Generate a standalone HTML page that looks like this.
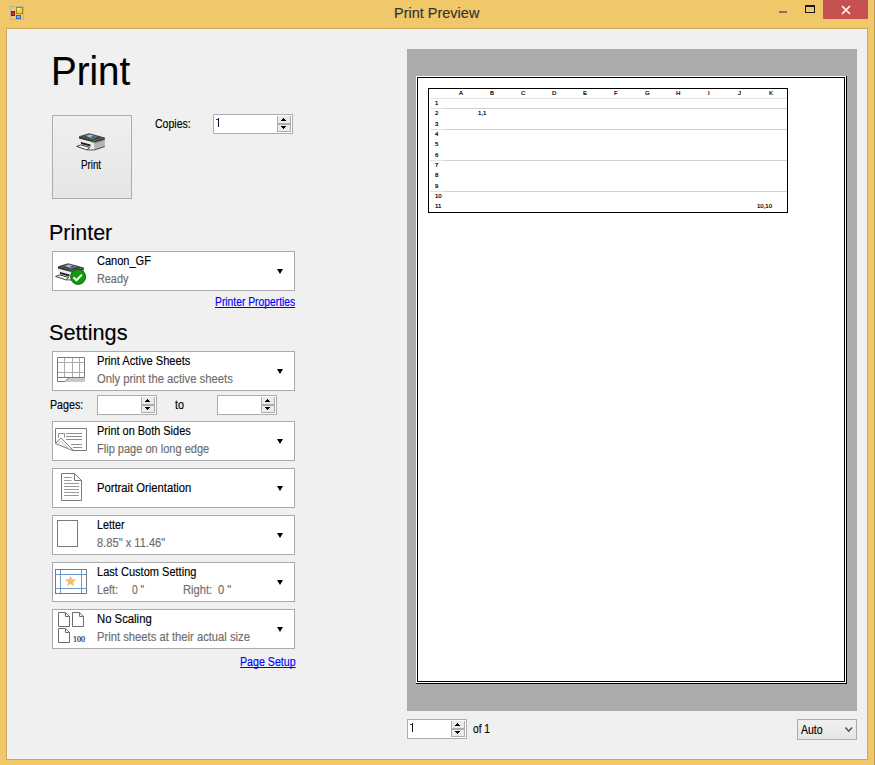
<!DOCTYPE html>
<html><head><meta charset="utf-8">
<style>
*{margin:0;padding:0;box-sizing:border-box}
html,body{width:875px;height:765px;overflow:hidden;background:#F0C869;font-family:"Liberation Sans",sans-serif}
.a{position:absolute}
svg{position:absolute;display:block;overflow:visible}
.t{position:absolute;white-space:nowrap;font-size:12px;line-height:14px;color:#000;transform-origin:0 0;-webkit-text-stroke:0.15px currentColor}
.g{color:#6D6D6D}
.combo{position:absolute;left:52px;width:243px;height:40px;background:#fff;border:1px solid #ABABAB}
.spin{position:absolute;height:20px;background:#fff;border:1px solid #ABADB3}
.link{color:#0000FF;text-decoration:underline;text-decoration-skip-ink:none}
.cl{position:absolute;left:430px;height:1px;background:#E3E3E3}
.cd{position:absolute;left:446px;width:341px;height:1px;background:#D0D0D0}
.hd{position:absolute;margin-top:1px;font-size:6px;line-height:7px;font-weight:normal;color:#000;white-space:nowrap;-webkit-text-stroke:0.2px #000}
</style></head><body>
<!-- frame -->
<div class="a" style="left:874px;top:0;width:1px;height:765px;background:#B9974F"></div>
<div class="a" style="left:6px;top:28px;width:862px;height:732px;background:#F5F6FB;border:1px solid #C9A55A"></div>
<div class="a" style="left:8px;top:30px;width:858px;height:728px;background:#F0F0F0"></div>

<!-- title bar -->
<svg style="left:10px;top:6px" width="14" height="14" viewBox="0 0 14 14" shape-rendering="crispEdges">
  <rect x="0.5" y="0.5" width="13" height="13" fill="none" stroke="#B7B5AC" stroke-width="1"/>
  <rect x="6" y="1" width="7" height="7" fill="#A8841C"/>
  <rect x="7" y="2" width="5" height="5" fill="#F6CF45"/>
  <rect x="7" y="2" width="3" height="2" fill="#FBE9A0"/>
  <rect x="1" y="5" width="4" height="5" fill="#8E1414"/>
  <rect x="2" y="6" width="2" height="3" fill="#D83030"/>
  <rect x="6" y="9" width="5" height="4" fill="#2F63C0"/>
  <rect x="7" y="10" width="3" height="2" fill="#7FB0F0"/>
  <rect x="2" y="2" width="3" height="2" fill="#F5C870"/>
  <rect x="1" y="11" width="2" height="2" fill="#F5C870"/>
  <rect x="4" y="11" width="1" height="2" fill="#F5C870"/>
  <rect x="12" y="9" width="1" height="3" fill="#F5C870"/>
</svg>
<div id="t1" class="t" style="left:394px;top:4px;font-size:15px;line-height:18px;color:#333;transform:scaleX(0.966)">Print Preview</div>
<div class="a" style="left:779px;top:11px;width:8px;height:2px;background:#857650"></div>
<div class="a" style="left:805px;top:5px;width:10px;height:8px;border:1px solid #1A1A1A;border-top-width:2px"></div>
<div class="a" style="left:823px;top:0;width:45px;height:19px;background:#C75050"></div>
<svg style="left:823px;top:0" width="45" height="19" viewBox="0 0 45 19"><path d="M19 6 L27 14 M27 6 L19 14" stroke="#fff" stroke-width="1.6"/></svg>

<!-- left panel -->
<div id="t2" class="t" style="left:51px;top:49px;font-size:40px;line-height:44px;transform:scaleX(0.963)">Print</div>

<div class="a" style="left:52px;top:115px;width:80px;height:84px;border:1px solid #ADADAD;background:linear-gradient(#F0F0F0,#E5E5E5)"></div>
<svg style="left:74px;top:130px" width="34" height="24" viewBox="0 0 34 24">
  <polygon points="5,8.5 20.2,12.6 20.2,19.6 5,15.4" fill="#EDEDED"/>
  <polygon points="20.2,12 30.8,8.6 30.8,16.4 20.2,19.8" fill="#B4B4B4"/>
  <polygon points="20.2,12 30.8,8.6 30.8,10.5 20.2,14" fill="#9A9A9A"/>
  <polygon points="5,6.2 15.2,3.2 30.8,7.6 20.2,10.8" fill="#474747"/>
  <polygon points="5,6.2 20.2,10.8 20.2,12.6 5,8.5" fill="#2E2E2E"/>
  <polygon points="20.2,10.8 30.8,7.6 30.8,9.4 20.2,12.6" fill="#3A3A3A"/>
  <polygon points="11.5,5.8 16,4.6 23,6.8 18.5,8.4" fill="#9CC4F0"/>
  <polygon points="16.5,6.6 20.5,6 22.5,7 18.5,8.3" fill="#2F6F4F"/>
  <rect x="17.8" y="11.3" width="1.4" height="1.4" fill="#2DB52D"/>
  <polygon points="7,12 16.5,14.6 16.5,16.6 7,14" fill="#1E1E1E"/>
  <polygon points="2.6,16.4 6.8,15 15.8,17.4 12.6,19.8" fill="#FFFFFF" stroke="#2A2A2A" stroke-width="0.9" stroke-linejoin="round"/>
  <path d="M12.8 19.8 L20.2 20 L30.8 16.6" fill="none" stroke="#3A3A3A" stroke-width="0.9"/>
</svg>
<div id="t3" class="t" style="left:80.80px;top:158px;transform:scaleX(0.810)">Print</div>

<div id="t4" class="t" style="left:155.2px;top:117px;transform:scaleX(0.879)">Copies:</div>
<div class="spin" style="left:213px;top:114px;width:80px"></div>
<svg style="left:277px;top:116px" width="14" height="16" viewBox="0 0 14 16" shape-rendering="crispEdges">
  <rect x="0" y="0" width="14" height="16" fill="#EBEBEB"/>
  <rect x="0" y="0" width="1" height="16" fill="#ADADAD"/><rect x="13" y="0" width="1" height="16" fill="#ADADAD"/>
  <rect x="0" y="15" width="14" height="1" fill="#ADADAD"/><rect x="0" y="7" width="14" height="2" fill="#ADADAD"/>
  <rect x="6" y="2" width="1" height="1" fill="#000"/><rect x="5" y="3" width="3" height="1" fill="#000"/><rect x="4" y="4" width="5" height="1" fill="#000"/>
  <rect x="4" y="10" width="5" height="1" fill="#000"/><rect x="5" y="11" width="3" height="1" fill="#000"/><rect x="6" y="12" width="1" height="1" fill="#000"/>
</svg>
<div class="a" style="left:218px;top:118px;width:1px;height:9px;background:#1A0A30"></div><div class="a" style="left:216px;top:119px;width:2px;height:1px;background:#5A3A20"></div>

<div id="t6" class="t" style="left:49px;top:220px;font-size:22.5px;line-height:26px;transform:scaleX(0.954)">Printer</div>
<div class="combo" style="top:251px"></div>
<svg style="left:53px;top:260px" width="36" height="28" viewBox="0 0 36 28">
  <polygon points="5,8.5 20.2,12.6 20.2,19.6 5,15.4" fill="#EDEDED"/>
  <polygon points="20.2,12 30.8,8.6 30.8,16.4 20.2,19.8" fill="#B4B4B4"/>
  <polygon points="20.2,12 30.8,8.6 30.8,10.5 20.2,14" fill="#9A9A9A"/>
  <polygon points="5,6.2 15.2,3.2 30.8,7.6 20.2,10.8" fill="#474747"/>
  <polygon points="5,6.2 20.2,10.8 20.2,12.6 5,8.5" fill="#2E2E2E"/>
  <polygon points="20.2,10.8 30.8,7.6 30.8,9.4 20.2,12.6" fill="#3A3A3A"/>
  <polygon points="11.5,5.8 16,4.6 23,6.8 18.5,8.4" fill="#9CC4F0"/>
  <polygon points="16.5,6.6 20.5,6 22.5,7 18.5,8.3" fill="#2F6F4F"/>
  <rect x="17.8" y="11.3" width="1.4" height="1.4" fill="#2DB52D"/>
  <polygon points="7,12 16.5,14.6 16.5,16.6 7,14" fill="#1E1E1E"/>
  <polygon points="2.6,16.4 6.8,15 15.8,17.4 12.6,19.8" fill="#FFFFFF" stroke="#2A2A2A" stroke-width="0.9" stroke-linejoin="round"/>
  <path d="M12.8 19.8 L20.2 20 L30.8 16.6" fill="none" stroke="#3A3A3A" stroke-width="0.9"/>

  <circle cx="25.1" cy="16.9" r="7.5" fill="#0B9B0B" stroke="#066806" stroke-width="0.9"/>
  <path d="M20.4 17.3 L23.4 20.3 L28.9 14.6" fill="none" stroke="#fff" stroke-width="2"/>
</svg>
<div id="t7" class="t" style="left:96.77px;top:254px;transform:scaleX(0.918)">Canon_GF</div>
<div id="t8" class="t g" style="left:97.26px;top:272px;transform:scaleX(0.904)">Ready</div>
<div id="t9" class="t link" style="left:215px;top:295px;transform:scaleX(0.859)">Printer Properties</div>

<div id="t10" class="t" style="left:49px;top:320px;font-size:22.5px;line-height:26px;transform:scaleX(0.966)">Settings</div>
<div class="combo" style="top:351px"></div>
<svg style="left:52px;top:351px" width="40" height="40" viewBox="0 0 40 40">
  <g stroke="#ABABAB" stroke-width="1" fill="none"><path d="M12.5 7 V26 M20.5 7 V26 M27.5 7 V26 M6 11.5 H32 M6 21.5 H32"/></g>
  <polygon points="16.5,27 33,27 33,31 13,31" fill="#C9C9C9"/>
  <path d="M5.5 26.5 V6.5 H32.5 V26.5 H5.5 M5.5 26.5 V30.5 H13 L16.5 27" fill="none" stroke="#7A7A7A" stroke-width="1"/>
</svg>
<div id="t11" class="t" style="left:97.15px;top:354px;transform:scaleX(0.927)">Print Active Sheets</div>
<div id="t12" class="t g" style="left:96.98px;top:372px;transform:scaleX(0.938)">Only print the active sheets</div>

<div id="t13" class="t" style="left:49.91px;top:398px;transform:scaleX(0.890)">Pages:</div>
<div class="spin" style="left:97px;top:395px;width:60px"></div>
<svg style="left:141px;top:397px" width="14" height="16" viewBox="0 0 14 16" shape-rendering="crispEdges">
  <rect x="0" y="0" width="14" height="16" fill="#EBEBEB"/>
  <rect x="0" y="0" width="1" height="16" fill="#ADADAD"/><rect x="13" y="0" width="1" height="16" fill="#ADADAD"/>
  <rect x="0" y="15" width="14" height="1" fill="#ADADAD"/><rect x="0" y="7" width="14" height="2" fill="#ADADAD"/>
  <rect x="6" y="2" width="1" height="1" fill="#000"/><rect x="5" y="3" width="3" height="1" fill="#000"/><rect x="4" y="4" width="5" height="1" fill="#000"/>
  <rect x="4" y="10" width="5" height="1" fill="#000"/><rect x="5" y="11" width="3" height="1" fill="#000"/><rect x="6" y="12" width="1" height="1" fill="#000"/>
</svg>
<div id="t14" class="t" style="left:175px;top:398px;transform:scaleX(0.900)">to</div>
<div class="spin" style="left:217px;top:395px;width:60px"></div>
<svg style="left:261px;top:397px" width="14" height="16" viewBox="0 0 14 16" shape-rendering="crispEdges">
  <rect x="0" y="0" width="14" height="16" fill="#EBEBEB"/>
  <rect x="0" y="0" width="1" height="16" fill="#ADADAD"/><rect x="13" y="0" width="1" height="16" fill="#ADADAD"/>
  <rect x="0" y="15" width="14" height="1" fill="#ADADAD"/><rect x="0" y="7" width="14" height="2" fill="#ADADAD"/>
  <rect x="6" y="2" width="1" height="1" fill="#000"/><rect x="5" y="3" width="3" height="1" fill="#000"/><rect x="4" y="4" width="5" height="1" fill="#000"/>
  <rect x="4" y="10" width="5" height="1" fill="#000"/><rect x="5" y="11" width="3" height="1" fill="#000"/><rect x="6" y="12" width="1" height="1" fill="#000"/>
</svg>

<div class="combo" style="top:421px"></div>
<svg style="left:52px;top:421px" width="40" height="40" viewBox="0 0 40 40">
  <rect x="3.5" y="7.5" width="31" height="22" fill="#fff"/>
  <path d="M3.5 22 V7.5 H34.5 V29.5 H21.5" fill="none" stroke="#7A7A7A" stroke-width="1"/>
  <g stroke="#8E8E8E" stroke-width="1" fill="none">
   <path d="M14 12.5 H30 M14 15.5 H30 M14 18.5 H30 M19 23.5 H30 M21 26.5 H30"/>
   <path d="M6.5 17 V12.5 H12.5 V16.5"/>
  </g>
  <polygon points="3.5,22.5 8.8,17 22,30 " fill="#fff" stroke="#7A7A7A" stroke-width="1" stroke-linejoin="round"/>
  <path d="M6.5 22.5 L8.8 20.2 L17 28" fill="none" stroke="#BDBDBD" stroke-width="1"/>
</svg>
<div id="t15" class="t" style="left:96.91px;top:424px;transform:scaleX(0.912)">Print on Both Sides</div>
<div id="t16" class="t g" style="left:96.94px;top:442px;transform:scaleX(0.919)">Flip page on long edge</div>

<div class="combo" style="top:468px"></div>
<svg style="left:52px;top:468px" width="40" height="40" viewBox="0 0 40 40">
  <polygon points="9.5,5.5 22.5,5.5 29.5,12.5 29.5,32.5 9.5,32.5" fill="#fff" stroke="#7A7A7A" stroke-width="1"/>
  <path d="M22.5 5.5 V12.5 H29.5" fill="none" stroke="#7A7A7A" stroke-width="1"/>
  <g stroke="#9A9A9A" stroke-width="1"><path d="M12 9.5 H19.5 M12 12.5 H19.5 M12 15.5 H27 M12 18.5 H27 M12 21.5 H27 M12 24.5 H27 M12 27.5 H27"/></g>
</svg>
<div id="t17" class="t" style="left:96.85px;top:481px;transform:scaleX(0.936)">Portrait Orientation</div>

<div class="combo" style="top:515px"></div>
<svg style="left:52px;top:515px" width="40" height="40" viewBox="0 0 40 40">
  <rect x="5.5" y="5.5" width="20" height="26" fill="#fff" stroke="#7A7A7A" stroke-width="1"/>
</svg>
<div id="t18" class="t" style="left:97.23px;top:518px;transform:scaleX(0.895)">Letter</div>
<div id="t19" class="t g" style="left:96.61px;top:536px;transform:scaleX(0.926)">8.85" x 11.46"</div>

<div class="combo" style="top:562px"></div>
<svg style="left:52px;top:562px" width="40" height="40" viewBox="0 0 40 40">
  <rect x="3.5" y="7.5" width="31" height="24" fill="#fff" stroke="#7A7A7A" stroke-width="1"/>
  <g stroke="#6E9AD0" stroke-width="1"><path d="M4 12.5 H34 M4 26.5 H34 M8.5 8 V31 M29.5 8 V31"/></g>
  <polygon points="18.60,13.40 20.13,17.30 24.31,17.55 21.07,20.20 22.13,24.25 18.60,22.00 15.07,24.25 16.13,20.20 12.89,17.55 17.07,17.30" fill="#EDBE72"/>
</svg>
<div id="t20" class="t" style="left:97.19px;top:565px;transform:scaleX(0.920)">Last Custom Setting</div>
<div id="t21" class="t g" style="left:97.24px;top:583px;transform:scaleX(0.905)">Left:</div>
<div id="t22" class="t g" style="left:132px;top:583px;transform:scaleX(0.857)">0 "</div>
<div id="t23" class="t g" style="left:183px;top:583px;transform:scaleX(0.931)">Right:</div>
<div id="t24" class="t g" style="left:218px;top:583px;transform:scaleX(0.929)">0 "</div>

<div class="combo" style="top:609px"></div>
<svg style="left:52px;top:609px" width="40" height="40" viewBox="0 0 40 40">
  <g fill="#fff" stroke="#6E6E6E" stroke-width="1">
   <path d="M6.5 3.5 H13.5 L17.5 7.5 V17.5 H6.5 Z"/>
   <path d="M20.5 3.5 H27.5 L31.5 7.5 V17.5 H20.5 Z"/>
   <path d="M6.5 19.5 H13.5 L17.5 23.5 V33.5 H6.5 Z"/>
   <path d="M13.5 3.5 V7.5 H17.5 M27.5 3.5 V7.5 H31.5 M13.5 19.5 V23.5 H17.5" fill="none"/>
  </g>
</svg>
<div class="a" style="left:73px;top:634px;font-family:'Liberation Serif',serif;font-size:9px;line-height:10px;color:#222;white-space:nowrap;transform:scaleX(0.9);transform-origin:0 0;-webkit-text-stroke:0.2px #222">100</div>
<div id="t25" class="t" style="left:97.15px;top:612px;transform:scaleX(0.943)">No Scaling</div>
<div id="t26" class="t g" style="left:97.21px;top:630px;transform:scaleX(0.936)">Print sheets at their actual size</div>
<div id="t27" class="t link" style="left:239.64px;top:655px;transform:scaleX(0.887)">Page Setup</div>

<!-- combo arrows -->
<svg style="left:0;top:0" width="875" height="765" viewBox="0 0 875 765">
 <g fill="#000">
  <polygon points="277,269 283,269 280,274"/>
  <polygon points="277,369 283,369 280,374"/>
  <polygon points="277,439 283,439 280,444"/>
  <polygon points="277,486 283,486 280,491"/>
  <polygon points="277,533 283,533 280,538"/>
  <polygon points="277,580 283,580 280,585"/>
  <polygon points="277,627 283,627 280,632"/>
 </g>
</svg>

<!-- preview -->
<div class="a" style="left:407px;top:49px;width:450px;height:662px;background:#ABABAB"></div>
<div class="a" style="left:416px;top:76px;width:430px;height:607px;background:#fff;border:1px solid #fff"></div>
<div class="a" style="left:417px;top:77px;width:428px;height:605px;border:1px solid #000"></div>
<div class="a" style="left:846px;top:76px;width:1px;height:608px;background:#000"></div>
<div class="a" style="left:416px;top:683px;width:431px;height:1px;background:#000"></div>
<!-- table -->
<div class="a" style="left:428px;top:88px;width:360px;height:125px;border:1px solid #000"></div>
<div class="cl" style="top:98px;width:357px"></div>
<div class="cl" style="top:108px;width:16px"></div><div class="cd" style="top:108px"></div>
<div class="cl" style="top:129px;width:16px"></div><div class="cd" style="top:129px"></div>
<div class="cl" style="top:160px;width:16px"></div><div class="cd" style="top:160px"></div>
<div class="cl" style="top:191px;width:16px"></div><div class="cd" style="top:191px"></div>
<div class="hd" style="left:459px;top:89px">A</div>
<div class="hd" style="left:490px;top:89px">B</div>
<div class="hd" style="left:521px;top:89px">C</div>
<div class="hd" style="left:552px;top:89px">D</div>
<div class="hd" style="left:583px;top:89px">E</div>
<div class="hd" style="left:614px;top:89px">F</div>
<div class="hd" style="left:645px;top:89px">G</div>
<div class="hd" style="left:676px;top:89px">H</div>
<div class="hd" style="left:708px;top:89px">I</div>
<div class="hd" style="left:738px;top:89px">J</div>
<div class="hd" style="left:769px;top:89px">K</div>
<div class="hd" style="left:435px;top:99px">1</div>
<div class="hd" style="left:435px;top:109px">2</div>
<div class="hd" style="left:435px;top:120px">3</div>
<div class="hd" style="left:435px;top:130px">4</div>
<div class="hd" style="left:435px;top:140px">5</div>
<div class="hd" style="left:435px;top:151px">6</div>
<div class="hd" style="left:435px;top:161px">7</div>
<div class="hd" style="left:435px;top:171px">8</div>
<div class="hd" style="left:435px;top:182px">9</div>
<div class="hd" style="left:435px;top:192px">10</div>
<div class="hd" style="left:435px;top:202px">11</div>
<div class="hd" style="left:478px;top:109px">1,1</div>
<div class="hd" style="left:757px;top:202px">10,10</div>

<!-- bottom -->
<div class="spin" style="left:407px;top:719px;width:60px"></div>
<svg style="left:451px;top:721px" width="14" height="16" viewBox="0 0 14 16" shape-rendering="crispEdges">
  <rect x="0" y="0" width="14" height="16" fill="#EBEBEB"/>
  <rect x="0" y="0" width="1" height="16" fill="#ADADAD"/><rect x="13" y="0" width="1" height="16" fill="#ADADAD"/>
  <rect x="0" y="15" width="14" height="1" fill="#ADADAD"/><rect x="0" y="7" width="14" height="2" fill="#ADADAD"/>
  <rect x="6" y="2" width="1" height="1" fill="#000"/><rect x="5" y="3" width="3" height="1" fill="#000"/><rect x="4" y="4" width="5" height="1" fill="#000"/>
  <rect x="4" y="10" width="5" height="1" fill="#000"/><rect x="5" y="11" width="3" height="1" fill="#000"/><rect x="6" y="12" width="1" height="1" fill="#000"/>
</svg>
<div class="a" style="left:412px;top:723px;width:1px;height:9px;background:#1A0A30"></div><div class="a" style="left:410px;top:724px;width:2px;height:1px;background:#5A3A20"></div>
<div id="t29" class="t" style="left:473px;top:722px;transform:scaleX(0.850)">of 1</div>
<div class="a" style="left:797px;top:719px;width:60px;height:21px;border:1px solid #ACACAC;background:linear-gradient(#F0F0F0,#E5E5E5)"></div>
<div id="t30" class="t" style="left:801px;top:723px;transform:scaleX(0.875)">Auto</div>
<svg style="left:844px;top:726px" width="10" height="8" viewBox="0 0 10 8"><path d="M1.5 1.5 L4.8 5.2 L8.1 1.5" fill="none" stroke="#505050" stroke-width="1.5"/></svg>
</body></html>
